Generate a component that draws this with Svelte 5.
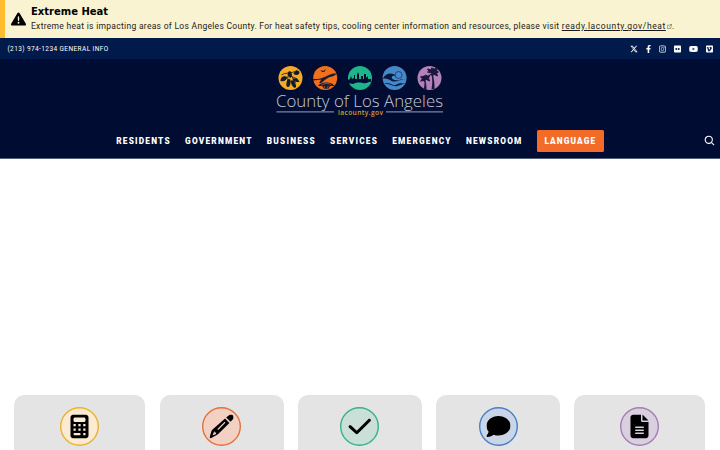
<script lang="ts">
  interface Icon {
    name: string;
    box: string;
    path: string;
    width: number;
  }

  const nav = ['Residents', 'Government', 'Business', 'Services', 'Emergency', 'Newsroom'];

  const socials: Icon[] = [
    { name: 'X', box: '0 0 512 512', width: 8, path: 'M389.2 48h70.6L305.6 224.2 487 464H345L233.7 318.6 106.5 464H35.8L200.7 275.5 26.8 48H172.4L272.9 180.9 389.2 48zM364.4 421.8h39.1L151.1 88h-42L364.4 421.8z' },
    { name: 'Facebook', box: '0 0 320 512', width: 5, path: 'M279 288l14-93h-89v-60c0-25 12-50 52-50h41V7s-37-7-72-7c-73 0-121 44-121 125v70H23v93h81v224h100V288z' },
    { name: 'Instagram', box: '0 0 448 512', width: 7, path: 'M224 141a115 115 0 1 0 0 230 115 115 0 0 0 0-230zm0 190a75 75 0 1 1 0-150 75 75 0 0 1 0 150zM371 136a27 27 0 1 1-54 0 27 27 0 0 1 54 0zM130 32h188c76 0 130 54 130 130v188c0 76-54 130-130 130H130C54 480 0 426 0 350V162C0 86 54 32 130 32zm0 41c-58 0-89 31-89 89v188c0 58 31 89 89 89h188c58 0 89-31 89-89V162c0-58-31-89-89-89z' },
    { name: 'Flickr', box: '0 0 448 512', width: 7, path: 'M400 32H48C22 32 0 54 0 80v352c0 26 22 48 48 48h352c26 0 48-22 48-48V80c0-26-22-48-48-48zM145 319a63 63 0 1 1 0-127 63 63 0 0 1 0 127zm159 0a63 63 0 1 1 0-127 63 63 0 0 1 0 127z' },
    { name: 'YouTube', box: '0 0 576 512', width: 9, path: 'M550 124c-6-24-25-42-49-49-43-11-213-11-213-11S118 64 75 75c-24 7-43 25-49 49-11 43-11 132-11 132s0 90 11 133c6 23 25 41 49 48 43 11 213 11 213 11s170 0 213-11c24-7 43-25 49-48 11-43 11-133 11-133s0-89-11-132zM232 338V175l143 81z' },
    { name: 'Vimeo', box: '0 0 448 512', width: 7, path: 'M403 32H45C20 32 0 52 0 77v358c0 25 20 45 45 45h358c25 0 45-20 45-45V77c0-25-20-45-45-45zm-26 149c-1 34-25 81-72 141-49 63-89 94-123 94-20 0-38-19-52-57-28-102-39-161-61-161-3 0-11 5-26 16l-16-20c37-33 73-69 95-71 26-3 41 15 47 52 21 131 30 151 67 92 14-21 21-37 22-48 3-33-26-31-45-22 16-51 45-76 89-75 33 1 48 22 75 59z' }
  ];

  const cards = [
    { name: 'calculator', line: '#eeb02f', fill: '#fbebd0', box: '0 0 384 512', path: 'M64 0C29 0 0 29 0 64v384c0 35 29 64 64 64h256c35 0 64-29 64-64V64c0-35-29-64-64-64zM96 64h192c18 0 32 14 32 32v32c0 18-14 32-32 32H96c-18 0-32-14-32-32V96c0-18 14-32 32-32zM64 200h48v48H64zm104 0h48v48h-48zm104 0h48v48h-48zM64 296h48v48H64zm104 0h48v48h-48zm104 0h48v48h-48zM88 392h104c32 0 32 48 0 48H88c-32 0-32-48 0-48zm184 0h48v48h-48z' },
    { name: 'pencil', line: '#e5703d', fill: '#f3d1c2', box: '0 0 512 512', path: 'M410 23c28-28 66-28 91-4 19 25 19 65-6 90l-47 47L355 63zM332 86l93 93-239 239c-10 9-20 16-33 20L30 507c-17 5-31-9-26-26L40 357c4-13 10-24 19-33zM94 371l-29 76 76-29v-34h-32v-32zM332 165c-5-5-13-5-18 0L174 305c-6 6-6 12 0 18s12 6 18 0l140-140c6-6 6-12 0-18z' },
    { name: 'check', line: '#36b388', fill: '#c9dfd7', box: '0 0 512 512', path: 'M489 99c13 13 13 33 0 46L221 413c-13 13-33 13-46 0L33 283c-13-13-13-33 0-46s33-13 46 0l118 108L443 99c13-13 33-13 46 0z' },
    { name: 'comment', line: '#4a7fc6', fill: '#cad6e7', box: '0 0 512 512', path: 'M512 240c0 115-115 208-256 208-37 0-72-6-104-18-29 22-76 50-132 50-9 0-17-5-20-13-4-8-2-17 4-23 20-22 34-47 42-76C17 332 0 288 0 240 0 125 115 32 256 32s256 93 256 208z' },
    { name: 'document', line: '#a57cb5', fill: '#dacfdf', box: '0 0 384 512', path: 'M64 0C29 0 0 29 0 64v384c0 35 29 64 64 64h256c35 0 64-29 64-64V160H256c-18 0-32-14-32-32V0zm192 0v128h128zM112 256h160c21 0 21 32 0 32H112c-21 0-21-32 0-32zm0 64h160c21 0 21 32 0 32H112c-21 0-21-32 0-32zm0 64h160c21 0 21 32 0 32H112c-21 0-21-32 0-32z' }
  ];
</script>

<div class="alert">
  <svg class="warning" viewBox="0 0 512 448" aria-hidden="true">
    <path fill-rule="evenodd" d="M256 0c14 0 27 8 34 20l217 368c16 27-3 60-34 60H39C8 448-11 415 5 388L222 20c7-12 20-20 34-20zm0 128c-13 0-24 11-24 24v112c0 32 48 32 48 0V152c0-13-11-24-24-24zm0 192a32 32 0 1 0 0 64 32 32 0 0 0 0-64z" />
  </svg>
  <div>
    <h2>Extreme Heat</h2>
    <p>Extreme heat is impacting areas of Los Angeles County. For heat safety tips, cooling center information and resources, please visit <a href="#heat">ready.lacounty.gov/heat</a><svg class="external" viewBox="0 0 12 12" aria-hidden="true"><path d="M5 3H1v8h8V7M6 1h5v5M11 1L5 7" /></svg>.</p>
  </div>
</div>

<header>
  <div class="topbar">
    <span>(213) 974-1234 GENERAL INFO</span>
    <div class="socials">
      {#each socials as icon (icon.name)}
        <svg viewBox={icon.box} style:width="{icon.width}px" role="img" aria-label={icon.name}>
          <path fill-rule="evenodd" d={icon.path} />
        </svg>
      {/each}
    </div>
  </div>

  <div class="brand">
    <svg width="168" height="52" viewBox="0 0 168 52" role="img" aria-label="County of Los Angeles">
      <g transform="translate(14.5 12)">
        <circle r="12" fill="#f7aa24" />
        <g fill="#101a30">
          <path d="M-1-7C2-6 2-2 0 0c-3-2-4-5-1-7zM-3-1c-5-2-7 1-7 4 4 1 6-1 7-4zM3-4c1-4 5-4 6-2 0 3-3 4-6 2zM2 1c3-2 6 0 7 3-4 0-6 0-7-3z" />
          <ellipse cx="-2" cy="5" rx="2" ry="4" transform="rotate(12 -2 5)" />
          <ellipse cx="3" cy="6" rx="2" ry="4" transform="rotate(-25 3 6)" />
        </g>
        <path d="M-9-3C-5-6 2-4 7-8M-2-5L-3 3M0-4l5 9M0-2l7 3" fill="none" stroke="#101a30" stroke-width=".8" />
      </g>
      <g transform="translate(49.2 12)">
        <circle r="12" fill="#f0701d" />
        <path d="M-12 1l5 0C-2 0 3-3 8-4.5l3.5 0C10-2 7-1.5 4-.8L1 1-4 5l-2 0 2-3.5-8 1zM-5-8l3 1 3-2-2 3-2 0zM-7 8c1-4 14-5 16 0L5 8 3 11h-4L-3 8z" fill="#191d31" />
        <path d="M-4 7c3-2 8-2 10 0M-1 8l1 3M3 8L2 11" fill="none" stroke="#f0701d" stroke-width=".6" />
      </g>
      <g transform="translate(84 12)">
        <circle r="12" fill="#1eb58a" />
        <path d="M-12 5V2l2-1 1-3 1 3 2-1v-3h1v4h2v-4l1-3 1 3v4h2v-3h2v3h1v-5h2v4l2-2v3h3v3C9 3 7 6 3 5-2 4-5 5-7 6z" fill="#000c32" />
      </g>
      <g transform="translate(118.6 12)">
        <circle r="12" fill="#4788c8" />
        <circle cx="4" cy="-3" r="3.5" fill="#4788c8" stroke="#0b1d43" stroke-width=".6" />
        <path d="M-12 1C-9-5-2-6 1-2-2-3-4-1-2 1c4 3 8-1 13 1-6-1-9 3-14 1-3-2-6-3-9-2zM-11 6c5-3 8 2 12 1 3-2 6-2 10-1C5 6 4 9 0 8c-4 0-6-3-11-2z" fill="#07193e" />
      </g>
      <g transform="translate(153.5 12)">
        <circle r="12" fill="#b381bb" />
        <path d="M3-4c2 6 2 10 2 15H2C3 6 3 1 2-4zM-4 3c1 4 1 6 1 9h-3c1-4 1-6 1-9z" fill="#1b183b" />
        <path d="M3-5l-5-1 2 0-2-3 4 1 0-2 3 1 3-1-1 3 2 1-2 1 1 3-4-2-1 3-1-3-3 2zM-4 2l-4 0 1-2-2-1 4-1 1-1 2 1 2 0-1 2 1 3-4-2-1 3-1-2-3 1z" fill="#1b183b" stroke="#1b183b" />
      </g>
      <text class="wordmark" x="0" y="40.5" textLength="167" lengthAdjust="spacingAndGlyphs">County of Los Angeles</text>
      <path d="M.5 45.8H58M110 45.8h57" stroke="#7983a0" stroke-width="1.3" />
      <text class="domain" x="62" y="48.8" textLength="45">lacounty.gov</text>
    </svg>
  </div>

  <nav>
    <div class="links">
      {#each nav as item (item)}
        <a href="#{item}">{item}</a>
      {/each}
      <button class="language">Language</button>
    </div>
    <svg class="search" viewBox="0 0 12 12" role="img" aria-label="Search">
      <circle cx="5.2" cy="5.2" r="3.9" />
      <path d="M8 8l3 3" />
    </svg>
  </nav>
</header>

<main>
  {#each cards as card (card.name)}
    <section class="card">
      <svg class="badge" viewBox="0 0 39 39" role="img" aria-label={card.name}>
        <circle cx="19.5" cy="19.5" r="18.8" fill={card.fill} stroke={card.line} stroke-width="1.4" />
        <svg x="7.5" y="7.5" width="24" height="24" viewBox={card.box}>
          <path fill-rule="evenodd" d={card.path} />
        </svg>
      </svg>
    </section>
  {/each}
</main>

<style>
  :global(body) {
    background: #fff;
  }
  .alert {
    box-sizing: border-box;
    height: 38px;
    padding: 5px 0 0 6px;
    border-left: 5px solid #ffbc2f;
    background: #faf3d1;
    display: flex;
    gap: 5px;
    color: #1b1b1b;
  }
  .warning {
    width: 15px;
    height: 14px;
    margin-top: 7px;
    fill: #000;
    flex: none;
  }
  h2 {
    margin: 0;
    font: bold 10px/14px 'DejaVu Sans', sans-serif;
    color: #000;
  }
  p {
    margin: 1px 0 0;
    font: 8.5px/12px Roboto, sans-serif;
    letter-spacing: 0.293px;
    white-space: nowrap;
  }
  p a {
    color: inherit;
    letter-spacing: 0.6px;
    text-underline-offset: 1px;
  }
  .external {
    width: 5px;
    height: 5px;
    margin-left: 1px;
    fill: none;
    stroke: #55534a;
    stroke-width: 1.3;
  }
  header {
    height: 120px;
    background: #000c32;
    border-bottom: 1px solid #565d79;
    color: #fff;
    font-family: Roboto, sans-serif;
  }
  .topbar {
    height: 21px;
    padding: 0 7px 0 7.5px;
    background: #001a4c;
    display: flex;
    align-items: center;
    justify-content: space-between;
    font-size: 6.5px;
    letter-spacing: 0.4px;
  }
  .socials {
    display: flex;
    align-items: center;
    gap: 8px;
  }
  .socials svg {
    height: 8px;
    fill: #fff;
  }
  .brand {
    height: 59px;
    padding-top: 7px;
    box-sizing: border-box;
    display: flex;
    justify-content: center;
  }
  .wordmark {
    font: 300 16.5px 'Open Sans', sans-serif;
    fill: #c4c9d8;
  }
  .domain {
    font: 600 6.6px 'Open Sans', sans-serif;
    fill: #dd9d2e;
  }
  nav {
    height: 40px;
    display: grid;
    grid-template-columns: 1fr auto 1fr;
    padding: 0 5px;
  }
  .links {
    grid-column: 2;
    align-self: start;
    margin-top: 12px;
    height: 21px;
    display: flex;
    align-items: center;
    gap: 14.2px;
    font-size: 8.3px;
    font-weight: 900;
    letter-spacing: 1.2px;
    text-transform: uppercase;
  }
  .links a {
    color: #fff;
    text-decoration: none;
  }
  .language {
    height: 22px;
    width: 67px;
    padding: 0;
    border: 0;
    border-radius: 1.5px;
    background: #f26b27;
    color: #fff;
    font: inherit;
    letter-spacing: 1.1px;
    text-transform: inherit;
  }
  .search {
    grid-column: 3;
    justify-self: end;
    width: 11px;
    height: 11px;
    margin-top: 17px;
    fill: none;
    stroke: #fff;
    stroke-width: 1.2;
  }
  main {
    padding: 236px 14.6px 0 14.4px;
    display: grid;
    grid-template-columns: 131px 124px 124px 124px 131px;
    justify-content: space-between;
  }
  .card {
    height: 55px;
    padding-top: 12px;
    box-sizing: border-box;
    border-radius: 10px 10px 0 0;
    background: #e4e4e4;
    display: flex;
    align-items: flex-start;
    justify-content: center;
  }
  .badge {
    width: 39px;
    height: 39px;
  }
</style>
